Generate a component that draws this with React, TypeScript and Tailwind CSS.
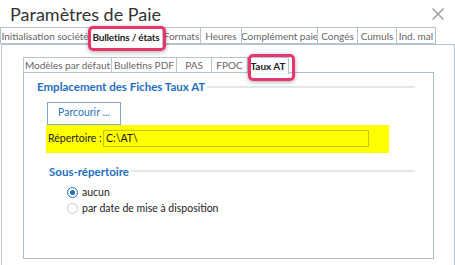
const outerTabs = [
  { label: "Initialisation société", w: "w-[90px]" },
  { label: "Bulletins / états", w: "w-[74px]", active: true },
  { label: "Formats", w: "w-[39px]" },
  { label: "Heures", w: "w-[42px]" },
  { label: "Complément paie", w: "w-[77px]" },
  { label: "Congés", w: "w-[41px]" },
  { label: "Cumuls", w: "w-[40px]" },
  { label: "Ind. mal", w: "w-[40px]" },
];

const innerTabs = [
  { label: "Modèles par défaut", w: "w-[89px]" },
  { label: "Bulletins PDF", w: "w-[66px]" },
  { label: "PAS", w: "w-[36px]" },
  { label: "FPOC", w: "w-[37px]" },
  { label: "Taux AT", w: "w-[42px]", active: true },
];

function Highlight({ className }: { className: string }) {
  return (
    <div
      className={`absolute rounded-[5px] border-[3px] border-[#e8356b] shadow-[0_1px_4px_rgba(0,0,0,0.35)] pointer-events-none ${className}`}
    />
  );
}

function GroupTitle({ children }: { children: string }) {
  return (
    <div className="flex items-center gap-[2px]">
      <span className="text-[11.5px] font-bold text-[#1f6fc1] leading-none whitespace-nowrap">{children}</span>
      <div className="flex-1 h-[2px] bg-[#e1e6eb]" />
    </div>
  );
}

export default function App() {
  return (
    <div className="w-[455px] h-[265px] bg-white overflow-hidden font-['Lato',sans-serif] text-[#444]">
      {/* header */}
      <div className="h-[27px] flex items-start justify-between">
        <div className="pl-[10px] pt-[3px] text-[18px] leading-[22px] text-[#333]">Paramètres de Paie</div>
        <svg className="mt-[8px] mr-[11px]" width="12" height="12" viewBox="0 0 12 12">
          <path d="M0.5 0.5L11.5 11.5M11.5 0.5L0.5 11.5" stroke="#9a9a9a" strokeWidth="1.4" />
        </svg>
      </div>

      {/* outer tabs */}
      <div className="flex h-[18px] relative z-10">
        {outerTabs.map((t) => (
          <div
            key={t.label}
            className={`${t.w} shrink-0 relative border border-[#b7c4cd] -mr-px flex items-center justify-center whitespace-nowrap overflow-hidden text-[10px] leading-none ${
              t.active ? "h-[19px] border-b-0 bg-white text-[#222] font-bold tracking-[-0.2px]" : "h-[17px] text-[#666]"
            }`}
          >
            {t.label}
          </div>
        ))}
        <Highlight className="left-[88px] top-[-1px] w-[78px] h-[25px]" />
      </div>

      {/* outer panel */}
      <div className="ml-px w-[454px] h-[230px] border border-[#b7c4cd] -mt-px pt-[12px] pl-[21px]">
        {/* inner tabs */}
        <div className="flex h-[16px] relative z-10">
          {innerTabs.map((t) => (
            <div
              key={t.label}
              className={`${t.w} shrink-0 border border-[#b7c4cd] -mr-px flex items-center justify-center whitespace-nowrap text-[10px] leading-none ${
                t.active ? "h-[17px] border-b-0 bg-white text-[#222] font-bold" : "h-[16px] text-[#666]"
              }`}
            >
              {t.label}
            </div>
          ))}
          <Highlight className="left-[225px] top-[-3px] w-[47px] h-[27px]" />
        </div>

        {/* inner panel */}
        <div className="w-[411px] h-[187px] border border-[#aebcc6] -mt-px pl-[13px] pr-[18px] pt-[8px]">
          <GroupTitle>Emplacement des Fiches Taux AT</GroupTitle>

          <div className="pl-[10px] mt-[9px]">
            <div className="w-[74px] h-[23px] border border-[#7fa9cf] flex items-center justify-center text-[10.5px] text-[#2c73bb]">
              Parcourir ...
            </div>
            <div className="w-[343px] h-[28px] -ml-px bg-[#ffff00] flex items-center pl-[2px] pr-[20px]">
              <span className="flex-1 text-[10.5px] text-[#222] whitespace-nowrap">Répertoire :</span>
              <div className="w-[266px] h-[17px] border border-[#c7c700] flex items-center pl-[2px] text-[10.5px] text-[#111]">
                C:\AT\
              </div>
            </div>
          </div>

          <div className="mt-[13px] pl-[12px] pr-[-3px]">
            <GroupTitle>Sous-répertoire</GroupTitle>
          </div>

          <div className="pl-[30px] mt-[9px] flex flex-col gap-[3px]">
            <div className="flex items-center gap-[4px] h-[13px]">
              <div className="w-[11px] h-[11px] rounded-full border border-[#1f6fc1] flex items-center justify-center">
                <div className="w-[5px] h-[5px] rounded-full bg-[#1f6fc1]" />
              </div>
              <span className="text-[10.5px] text-[#222]">aucun</span>
            </div>
            <div className="flex items-center gap-[4px] h-[13px]">
              <div className="w-[11px] h-[11px] rounded-full border border-[#c4c9ce]" />
              <span className="text-[10.5px] text-[#222]">par date de mise à disposition</span>
            </div>
          </div>
        </div>
      </div>
    </div>
  );
}
